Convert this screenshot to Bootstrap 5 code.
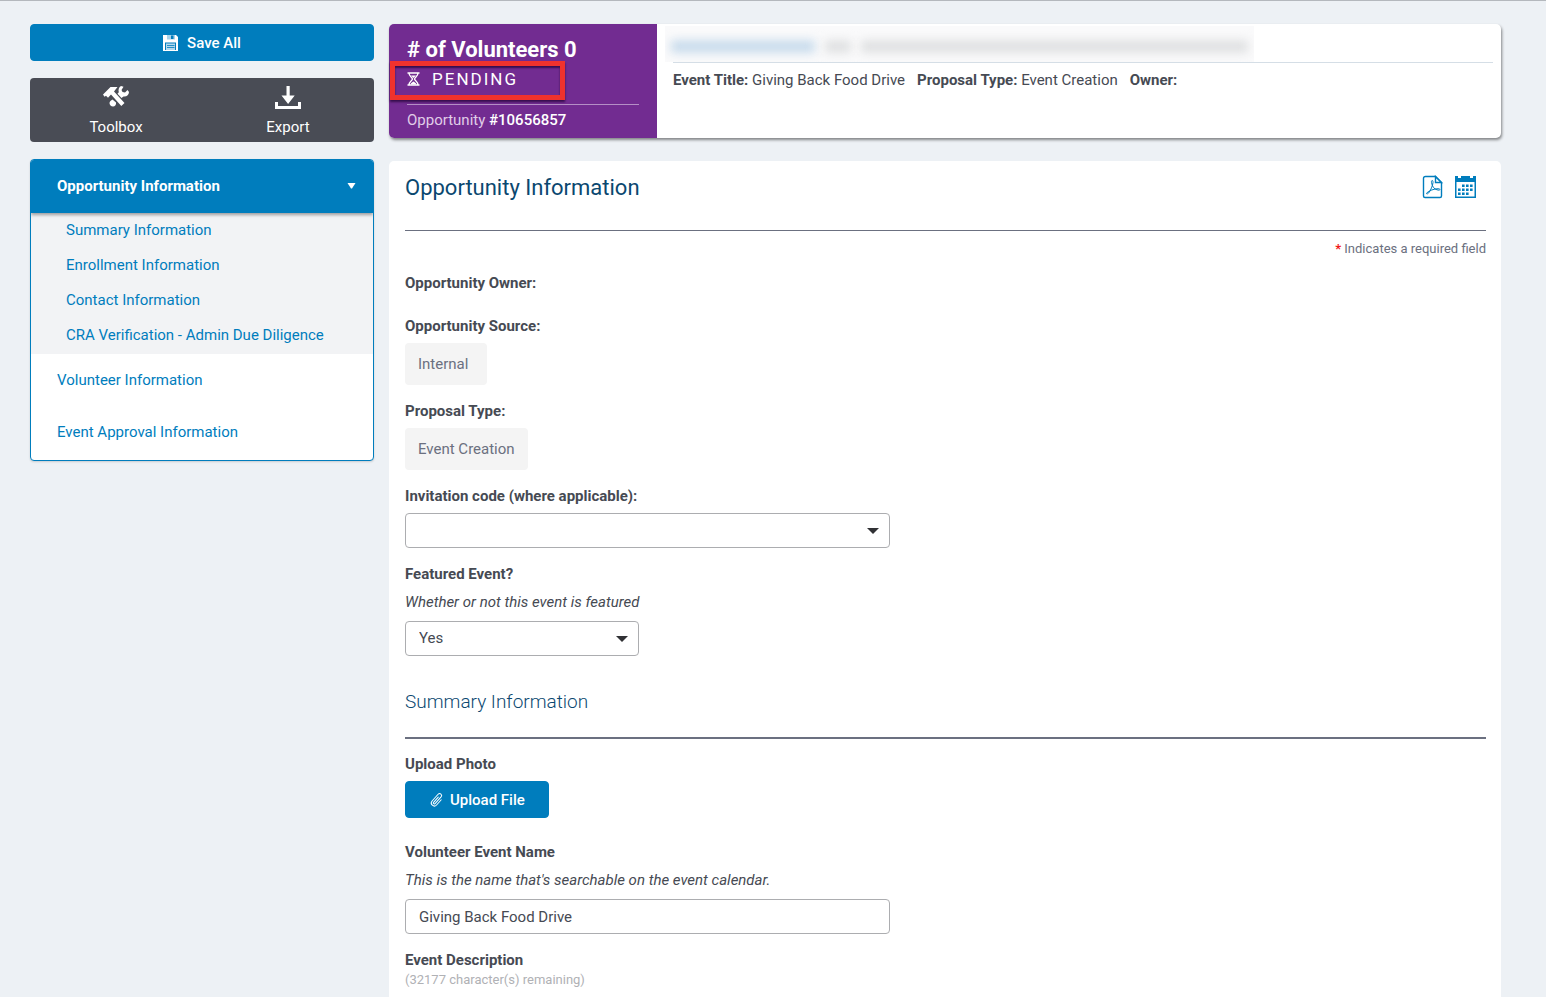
<!DOCTYPE html>
<html lang="en">
<head>
<meta charset="utf-8">
<meta name="viewport" content="width=device-width, initial-scale=1">
<title>Opportunity Information</title>
<link rel="stylesheet" href="https://cdn.jsdelivr.net/npm/bootstrap@5.3.0/dist/css/bootstrap.min.css">
<style>
:root { --brand: #007dbd; --ink: #464a53; --muted: #6b7080; --purple: #722c91; }
body { font-family: Roboto, "Liberation Sans", sans-serif; font-size: 15px; line-height: 20px; color: var(--ink); background: #edf1f5; }
svg { display: block; flex: none; }
.page { min-height: 100vh; border-top: 1px solid #b4b8bd; padding: 23px 45px 0 30px; gap: 15px; }
.side { width: 344px; flex: none; }
.btn-brand { --bs-btn-color: #fff; --bs-btn-bg: var(--brand); --bs-btn-border-color: var(--brand); --bs-btn-hover-color: #fff; --bs-btn-hover-bg: #006ba3; --bs-btn-hover-border-color: #006ba3; --bs-btn-font-size: 15px; --bs-btn-line-height: 20px; --bs-btn-font-weight: 500; --bs-btn-border-radius: 4px; height: 37px; }
.tools { height: 64px; margin-top: 17px; background: #494c55; border-radius: 4px; }
.tools button { color: #fff; background: none; border: 0; padding: 6px 0 5px; }
.side-nav { margin-top: 17px; border: 1px solid var(--brand); border-radius: 4px; background: #fff; box-shadow: 0 1px 2px rgba(0,0,0,.15); overflow: hidden; padding-bottom: 2px; }
.side-nav a { color: var(--brand); text-decoration: none; padding-left: 26px; height: 52px; }
.side-nav .head { background: var(--brand); color: #fff; font-weight: 700; height: 53px; padding: 0 17px 2px 26px; box-shadow: 0 2px 3px rgba(0,0,0,.35); position: relative; }
.side-nav .subs { background: #f2f3f5; height: 141px; }
.side-nav .subs a { padding: 0 0 2px 35px; height: 35px; }
.status { border-radius: 5px; background: #fff; height: 114px; box-shadow: 1px 2px 3px rgba(0,0,0,.45); }
.status-left { width: 268px; flex: none; background: var(--purple); color: #fff; border-radius: 5px 0 0 5px; padding: 13px 18px 0; }
.status-left h1 { font-size: 22px; line-height: 26px; font-weight: 700; margin: 0; }
.pending { font-size: 17px; line-height: 24px; letter-spacing: 2px; margin-top: 4px; gap: 12px; }
.opp-no { border-top: 1px solid #b58fc6; margin-top: 13px; padding-top: 5px; color: #e0cde8; }
.opp-no span { color: #fff; font-weight: 500; }
.callout { position: absolute; left: 1px; top: 37px; width: 175px; height: 39px; border: 5px solid #f0322d; box-shadow: 0 2px 2px rgba(30,0,50,.7), inset 0 2px 2px rgba(30,0,50,.7); pointer-events: none; }
.status-right { padding: 2px 8px 0; }
.hidden-name { width: 589px; max-width: 100%; height: 36px; background: #fafafb; padding: 4px 6px 0; gap: 10px; overflow: hidden; }
.hidden-name i { height: 13px; filter: blur(5px); background: #e0e1e2; }
.hidden-name .linkish { background: #c9dcec; }
.hidden-name .brief { width: 26px; }
.facts { border-top: 1px solid #d5dee6; margin-left: 8px; padding-top: 7px; gap: 12px; }
.sheet { margin-top: 23px; background: #fff; border-radius: 5px 5px 0 0; padding: 0 15px 6px 16px; }
.sheet h2 { font-size: 22px; line-height: 26px; font-weight: 400; color: #0b4870; margin: 0; }
.sheet-head { height: 70px; padding: 14px 9px 0 0; border-bottom: 1px solid var(--muted); }
.sheet-head button { padding: 0; border: 0; background: none; color: var(--brand); }
.required { font-size: 13px; color: var(--muted); margin: 8px 0 14px; text-align: right; }
.required span { color: #f01818; font-weight: 700; }
.field { margin-bottom: 16px; }
.field.owner { margin-bottom: 23px; }
.field label, .field .caption { display: block; font-weight: 700; margin: 0 0 7px; }
.field.owner .caption { margin: 0; }
.field .help { font-style: italic; margin: 8px 0 9px; }
.readonly { display: inline-block; vertical-align: top; min-width: 82px; height: 42px; padding: 11px 13px; background: #f4f4f4; border-radius: 4px; color: var(--muted); }
.field .form-control, .field .form-select { height: 35px; width: 485px; max-width: 100%; border: 1px solid #acadb0; border-radius: 4px; color: var(--ink); font-size: 15px; line-height: 20px; padding: 6px 13px; }
.field .form-select { padding: 5px 32px 7px 13px; background-image: url("data:image/svg+xml,%3Csvg xmlns='http://www.w3.org/2000/svg' viewBox='0 0 12 6'%3E%3Cpath d='M0 0h12L6 6z' fill='%23303134'/%3E%3C/svg%3E"); background-size: 12px 6px; background-position: right 10px center; }
.field .form-select.short { width: 234px; }
.sheet h3 { font-size: 19px; line-height: 26px; font-weight: 300; color: #0b4870; border-bottom: 2px solid var(--muted); margin: 33px 0 15px; padding-bottom: 22px; }
.field .upload { padding: 0 23px; gap: 5px; margin-bottom: 24px; }
.remaining { font-size: 13px; color: #b0b1b5; }
</style>
</head>
<body>
<div class="page d-flex">
  <aside class="side">
    <button type="button" class="btn btn-brand w-100 d-flex align-items-center justify-content-center gap-2">
      <svg width="16" height="16" viewBox="0 0 16 16"><path d="M0 0h13l2 2v14H0z" fill="#fff"/><path d="M4 0h8v4.500H4z" fill="#a9d3ea"/><path d="M8 .5h2.500v3.500H8z" fill="#007dbd"/><path d="M2 7.500h11v7.500H2z" fill="#007dbd"/><path d="M3 8.500h9V15H3z" fill="#b5d9ed"/><path d="M4 10.500h7.500M4 12.500h7.500" stroke="#007dbd" stroke-width=".8"/></svg>
      Save All
    </button>
    <div class="tools d-flex">
      <button type="button" class="w-50 d-flex flex-column align-items-center justify-content-between">
        <svg width="28" height="24" viewBox="0 0 28 24" fill="#fff"><path d="M1 10.500 8.500 3h7L12 7.500l10.500 11.500-3.200 3L9 10.500l-3 3.200-2-2-1.500 1z"/><path d="M19 2l2.500.800-2 3.200 1 2 2.500.500L25.500 6l1.500 2c0 3-2.500 5-5.500 4.500L19.500 14l-4-4.200 1.300-1.500C16 5.500 17 3 19 2z"/><path d="m10.500 15.500 3.500 3c.500 2-1 4-3 4s-3.500-1.600-3.500-3.500c0-1.500 1.500-2.500 3-3.500z"/></svg>
        Toolbox
      </button>
      <button type="button" class="w-50 d-flex flex-column align-items-center justify-content-between">
        <svg width="28" height="26" viewBox="0 0 28 26" fill="#fff"><path d="M12.500 2h3.200v9.500h5L14.100 20 7.500 11.500h5z"/><path d="M1 18h3v4h20v-4h3v7H1z"/></svg>
        Export
      </button>
    </div>
    <nav class="side-nav d-flex flex-column">
      <a href="#" class="head d-flex align-items-center justify-content-between">Opportunity Information
        <svg width="9" height="6" viewBox="0 0 9 6"><path d="M.5 0h8L5 5.500H4z" fill="#fff"/></svg></a>
      <div class="subs d-flex flex-column">
        <a href="#" class="d-flex align-items-center">Summary Information</a>
        <a href="#" class="d-flex align-items-center">Enrollment Information</a>
        <a href="#" class="d-flex align-items-center">Contact Information</a>
        <a href="#" class="d-flex align-items-center">CRA Verification - Admin Due Diligence</a>
      </div>
      <a href="#" class="d-flex align-items-center">Volunteer Information</a>
      <a href="#" class="d-flex align-items-center">Event Approval Information</a>
    </nav>
  </aside>
  <main class="flex-grow-1 d-flex flex-column">
    <header class="status d-flex position-relative">
      <div class="status-left">
        <h1># of Volunteers 0</h1>
        <div class="pending d-flex align-items-center">
          <svg width="13" height="14" viewBox="0 0 13 14" fill="none" stroke="#fff" stroke-width="1.300"><path d="M.5 1h12M.5 13h12M2 1c0 3.500 3 4 3.500 6C5 9 2 9.500 2 13M11 1c0 3.500-3 4-3.500 6 .5 2 3.500 2.500 3.500 6"/><path d="M4 3.500h5L6.500 6zM3.500 12.500c.5-2 2-2 3-3 1 1 2.500 1 3 3z" fill="#fff" stroke="none"/></svg>
          PENDING
        </div>
        <div class="opp-no">Opportunity <span>#10656857</span></div>
      </div>
      <div class="callout"></div>
      <div class="status-right flex-grow-1">
        <div class="hidden-name d-flex align-items-center" aria-hidden="true"><i class="linkish col-3"></i><i class="brief"></i><i class="flex-grow-1"></i></div>
        <div class="facts d-flex flex-wrap"><span><b>Event Title:</b> Giving Back Food Drive</span><span><b>Proposal Type:</b> Event Creation</span><b>Owner:</b></div>
      </div>
    </header>
    <section class="sheet flex-grow-1">
      <div class="sheet-head d-flex justify-content-between align-items-start">
        <h2>Opportunity Information</h2>
        <div class="d-flex">
          <button type="button" aria-label="Export as PDF" class="me-2"><svg width="24" height="24" viewBox="0 0 24 24" fill="none" stroke="currentColor" stroke-width="1.400"><path d="M4.500 1.500h10l6 6V21q0 1.500-1.500 1.500H4Q2.500 22.500 2.500 21V3.500q0-2 2-2z"/><path d="M14.500 1.500v6h6z"/><path d="M11.300 5.500c-1.500 0-.8 3 .3 5.500s3.500 4 6.500 4.200c1.500-.2 1-1.500-1-1.500-4 0-9 2-11.500 4.300-.5 1.200 1 1.200 2 0 2-2.500 4.200-7.500 4.400-10.500 0-1.200-.2-2-.7-2z" stroke-width="1"/></svg></button>
          <button type="button" aria-label="Calendar"><svg width="24" height="24" viewBox="0 0 24 24" fill="currentColor"><path fill-rule="evenodd" d="M2 1h3v2h3V1h9v2h3V1h3v22H2zm1.500 6v14.500h18V7z"/><path d="M9 9.500h2.600v2.600H9zm4 0h2.600v2.600H13zm4 0h2.600v2.600H17zM5 13.500h2.600v2.600H5zm4 0h2.600v2.600H9zm4 0h2.600v2.600H13zm4 0h2.600v2.600H17zM5 17.500h2.600V20H5zm4 0h2.600V20H9zm4 0h2.600V20H13z"/></svg></button>
        </div>
      </div>
      <p class="required"><span>*</span> Indicates a required field</p>
      <form>
        <div class="field owner"><div class="caption">Opportunity Owner:</div></div>
        <div class="field"><div class="caption">Opportunity Source:</div><div class="readonly">Internal</div></div>
        <div class="field"><div class="caption">Proposal Type:</div><div class="readonly">Event Creation</div></div>
        <div class="field"><label for="code">Invitation code (where applicable):</label>
          <select id="code" class="form-select"><option></option></select></div>
        <div class="field"><label for="featured">Featured Event?</label>
          <div class="help">Whether or not this event is featured</div>
          <select id="featured" class="form-select short"><option>Yes</option><option>No</option></select></div>
        <h3>Summary Information</h3>
        <div class="field"><label for="upload">Upload Photo</label>
          <button id="upload" type="button" class="btn btn-brand d-flex align-items-center upload">
            <svg width="16" height="16" viewBox="0 0 16 16" fill="#fff"><path transform="rotate(42 8 8)" d="M4.500 3a2.500 2.500 0 0 1 5 0v9a1.500 1.500 0 0 1-3 0V5a.5.5 0 0 1 1 0v7a.5.5 0 0 0 1 0V3a1.500 1.500 0 1 0-3 0v9a2.500 2.500 0 0 0 5 0V5a.5.5 0 0 1 1 0v7a3.500 3.500 0 1 1-7 0V3z"/></svg>
            Upload File</button></div>
        <div class="field"><label for="name">Volunteer Event Name</label>
          <div class="help">This is the name that's searchable on the event calendar.</div>
          <input id="name" type="text" class="form-control" value="Giving Back Food Drive"></div>
        <div class="fw-bold">Event Description</div>
        <div class="remaining">(32177 character(s) remaining)</div>
      </form>
    </section>
  </main>
</div>
<script src="https://cdn.jsdelivr.net/npm/bootstrap@5.3.0/dist/js/bootstrap.bundle.min.js"></script>
</body>
</html>
